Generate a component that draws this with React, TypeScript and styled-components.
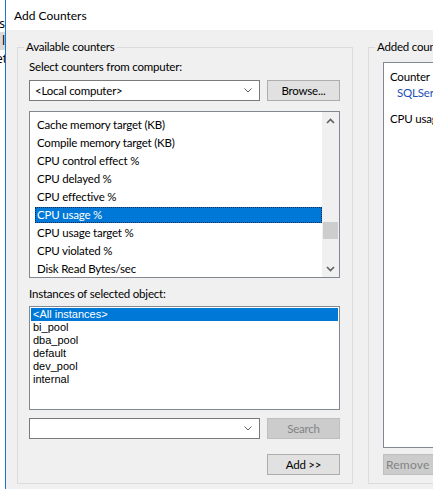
import styled, { createGlobalStyle } from "styled-components";

const GlobalStyle = createGlobalStyle`
  html, body {
    margin: 0;
    padding: 0;
  }
  body {
    width: 433px;
    height: 489px;
    overflow: hidden;
    font-family: Lato, "Noto Sans", sans-serif;
    font-size: 11.5px;
    letter-spacing: -0.2px;
    color: #000;
  }
`;

const counters = [
  "Cache memory target (KB)",
  "Compile memory target (KB)",
  "CPU control effect %",
  "CPU delayed %",
  "CPU effective %",
  "CPU usage %",
  "CPU usage target %",
  "CPU violated %",
  "Disk Read Bytes/sec",
];

const instances = ["<All instances>", "bi_pool", "dba_pool", "default", "dev_pool", "internal"];

const Chevron = ({ up }: { up?: boolean }) => (
  <svg width="9" height="6" viewBox="0 0 9 6">
    <polyline
      points={up ? "1,5 4.5,1.5 8,5" : "1,1 4.5,4.5 8,1"}
      fill="none"
      stroke="#606060"
      strokeWidth="1.6"
    />
  </svg>
);

const DropArrow = () => (
  <svg width="8" height="5" viewBox="0 0 8 5">
    <polyline points="0.5,0.5 4,4 7.5,0.5" fill="none" stroke="#606060" strokeWidth="1" />
  </svg>
);

const App = () => {
  return (
    <>
      <GlobalStyle />
      <Screen>
        <BackWindow>
          <BackRow $h={16}>Tools</BackRow>
          <BackRow $h={18} $selected>
            Perfmon l
          </BackRow>
          <BackRow $h={18}>
            <BackText $shift={2}>Set</BackText>
          </BackRow>
        </BackWindow>
        <Dialog>
          <TitleBar>Add Counters</TitleBar>
          <Body>
            <Group $width={336}>
              <Caption>Available counters</Caption>
              <GroupContent $left={11} $right={12}>
                <FieldLabel $top={4}>Select counters from computer:</FieldLabel>
                <ControlRow $top={5}>
                  <Combo>
                    <ComboText>&lt;Local computer&gt;</ComboText>
                    <DropArrow />
                  </Combo>
                  <Button>Browse...</Button>
                </ControlRow>
                <ListBox $top={10} $height={167}>
                  <TreeItems>
                    {counters.map((c) => (
                      <TreeItem key={c}>
                        <TreeText $selected={c === "CPU usage %"}>{c}</TreeText>
                      </TreeItem>
                    ))}
                  </TreeItems>
                  <ScrollBar>
                    <ScrollArrow>
                      <Chevron up />
                    </ScrollArrow>
                    <ScrollTrack>
                      <Thumb $offset={93} />
                    </ScrollTrack>
                    <ScrollArrow>
                      <Chevron />
                    </ScrollArrow>
                  </ScrollBar>
                </ListBox>
                <FieldLabel $top={8}>Instances of selected object:</FieldLabel>
                <ListBox $top={4} $height={104}>
                  <InstanceItems>
                    {instances.map((i, n) => (
                      <InstanceItem key={i} $selected={n === 0}>
                        {i}
                      </InstanceItem>
                    ))}
                  </InstanceItems>
                </ListBox>
                <ControlRow $top={8}>
                  <Combo>
                    <ComboText />
                    <DropArrow />
                  </Combo>
                  <Button disabled>Search</Button>
                </ControlRow>
                <ControlRow $top={15} $end>
                  <Button>Add &gt;&gt;</Button>
                </ControlRow>
              </GroupContent>
            </Group>
            <Group $width={220}>
              <Caption>Added counters</Caption>
              <GroupContent $left={14} $right={12}>
                <ListView $top={7}>
                  <ColumnHeader>
                    <Column $width={140}>Counter</Column>
                    <Column $width={60}>Parent</Column>
                  </ColumnHeader>
                  <ObjectRow>SQLServer:Resource Pool Stats</ObjectRow>
                  <CounterRow>CPU usage %</CounterRow>
                </ListView>
                <ControlRow $top={6}>
                  <RemoveButton disabled>Remove &lt;&lt;</RemoveButton>
                </ControlRow>
              </GroupContent>
            </Group>
          </Body>
        </Dialog>
      </Screen>
    </>
  );
};

const Screen = styled.div`
  display: flex;
  width: 433px;
  height: 489px;
  overflow: hidden;
  background: #ffffff;
`;

const BackWindow = styled.div`
  flex: 0 0 5px;
  display: flex;
  flex-direction: column;
  padding-top: 16px;
  overflow: hidden;
  background: #ffffff;
  font-family: "Noto Sans", sans-serif;
  font-size: 12px;
  letter-spacing: 0;
`;

const BackRow = styled.div<{ $h: number; $selected?: boolean }>`
  display: flex;
  justify-content: flex-end;
  height: ${(p) => p.$h}px;
  line-height: ${(p) => p.$h}px;
  white-space: nowrap;
  background: ${(p) => (p.$selected ? "#d9d9d9" : "transparent")};
`;

const BackText = styled.span<{ $shift: number }>`
  margin-right: -${(p) => p.$shift}px;
`;

const Dialog = styled.div`
  flex: 0 0 600px;
  display: flex;
  flex-direction: column;
  border-left: 1px solid #1c75c9;
  background: #f0f0f0;
`;

const TitleBar = styled.div`
  flex: 0 0 30px;
  display: flex;
  align-items: center;
  padding-left: 8px;
  background: #ffffff;
  font-size: 12px;
  letter-spacing: 0;
`;

const Body = styled.div`
  flex: 1;
  display: flex;
  gap: 15px;
  padding: 9px 0 5px 11px;
`;

const Group = styled.fieldset<{ $width: number }>`
  flex: 0 0 auto;
  box-sizing: border-box;
  width: ${(p) => p.$width}px;
  margin: 0;
  padding: 0;
  min-inline-size: 0;
  border: 1px solid #dcdcdc;
`;

const Caption = styled.legend`
  margin-left: 6px;
  padding: 0 2px;
  line-height: 16px;
`;

const GroupContent = styled.div<{ $left: number; $right: number }>`
  display: flex;
  flex-direction: column;
  padding: 0 ${(p) => p.$right}px 8px ${(p) => p.$left}px;
`;

const FieldLabel = styled.div<{ $top: number }>`
  margin-top: ${(p) => p.$top}px;
  line-height: 16px;
`;

const ControlRow = styled.div<{ $top: number; $end?: boolean }>`
  display: flex;
  gap: 7px;
  height: 21px;
  margin-top: ${(p) => p.$top}px;
  justify-content: ${(p) => (p.$end ? "flex-end" : "flex-start")};
`;

const Combo = styled.div`
  flex: 1;
  display: flex;
  align-items: center;
  box-sizing: border-box;
  padding: 0 7px 0 5px;
  border: 1px solid #7a7a7a;
  background: #ffffff;
`;

const ComboText = styled.span`
  flex: 1;
  white-space: nowrap;
`;

const Button = styled.button`
  flex: 0 0 73px;
  box-sizing: border-box;
  height: 21px;
  padding: 0;
  font: inherit;
  letter-spacing: inherit;
  color: #000;
  border: 1px solid #adadad;
  background: #e1e1e1;

  &:disabled {
    color: #838383;
    border-color: #bfbfbf;
    background: #cccccc;
  }
`;

const RemoveButton = styled(Button)`
  text-align: left;
  padding-left: 2px;
  font-size: 12px;
  letter-spacing: 0.2px;
  white-space: nowrap;
`;

const ListBox = styled.div<{ $top: number; $height: number }>`
  display: flex;
  box-sizing: border-box;
  height: ${(p) => p.$height}px;
  margin-top: ${(p) => p.$top}px;
  border: 1px solid #828790;
  background: #ffffff;
  overflow: hidden;
`;

const TreeItems = styled.div`
  flex: 1;
  display: flex;
  flex-direction: column;
  padding: 4px 0 0 5px;
`;

const TreeItem = styled.div`
  height: 18px;
  padding: 1px 0;
  box-sizing: border-box;
`;

const TreeText = styled.div<{ $selected?: boolean }>`
  height: 16px;
  line-height: 16px;
  padding-left: 2px;
  white-space: nowrap;
  color: ${(p) => (p.$selected ? "#ffffff" : "#000000")};
  background: ${(p) => (p.$selected ? "#0078d7" : "transparent")};
  outline: ${(p) => (p.$selected ? "1px dotted #0a2a50" : "none")};
  outline-offset: -1px;
`;

const ScrollBar = styled.div`
  flex: 0 0 17px;
  display: flex;
  flex-direction: column;
  background: #f0f0f0;
`;

const ScrollArrow = styled.div`
  flex: 0 0 17px;
  display: flex;
  align-items: center;
  justify-content: center;
`;

const ScrollTrack = styled.div`
  flex: 1;
  display: flex;
  flex-direction: column;
  align-items: center;
`;

const Thumb = styled.div<{ $offset: number }>`
  width: 15px;
  height: 17px;
  margin-top: ${(p) => p.$offset}px;
  background: #cdcdcd;
`;

const InstanceItems = styled.div`
  flex: 1;
  display: flex;
  flex-direction: column;
  padding: 1px 1px 0;
  font-family: "Liberation Sans", Arial, sans-serif;
  font-size: 11px;
  letter-spacing: 0;
`;

const InstanceItem = styled.div<{ $selected?: boolean }>`
  height: 13px;
  line-height: 13px;
  padding-left: 2px;
  color: ${(p) => (p.$selected ? "#ffffff" : "#000000")};
  background: ${(p) => (p.$selected ? "#0078d7" : "transparent")};
`;

const ListView = styled.div<{ $top: number }>`
  display: flex;
  flex-direction: column;
  box-sizing: border-box;
  height: 386px;
  margin-top: ${(p) => p.$top}px;
  padding-left: 6px;
  border: 1px solid #828790;
  background: #ffffff;
  overflow: hidden;
  white-space: nowrap;
`;

const ColumnHeader = styled.div`
  display: flex;
  padding-top: 6px;
  line-height: 16px;
`;

const Column = styled.div<{ $width: number }>`
  flex: 0 0 ${(p) => p.$width}px;
`;

const ObjectRow = styled.div`
  padding-left: 7px;
  line-height: 16px;
  color: #1e50b4;
`;

const CounterRow = styled.div`
  margin-top: 10px;
  line-height: 16px;
`;

export default App;
